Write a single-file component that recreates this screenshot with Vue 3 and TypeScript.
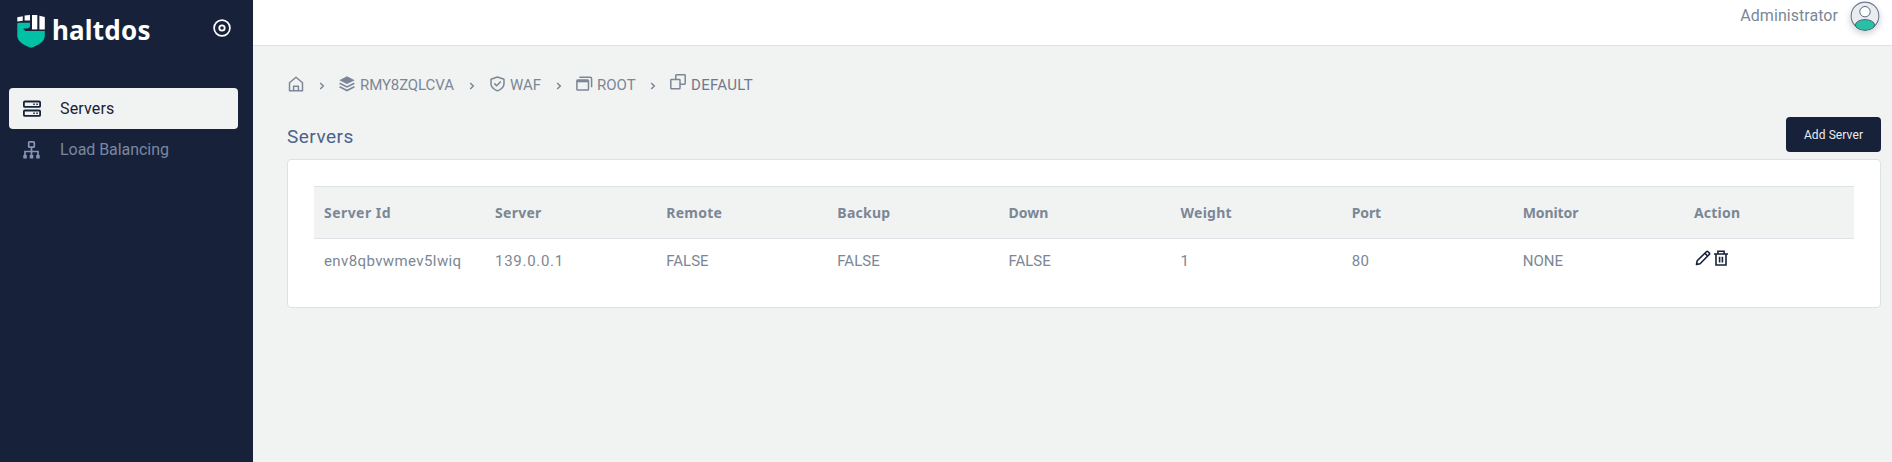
<script setup lang="ts">
interface ServerRow {
  id: string
  server: string
  remote: string
  backup: string
  down: string
  weight: number
  port: number
  monitor: string
}

const columns: string[] = ['Server Id', 'Server', 'Remote', 'Backup', 'Down', 'Weight', 'Port', 'Monitor', 'Action']

const rows: ServerRow[] = [
  {
    id: 'env8qbvwmev5lwiq',
    server: '139.0.0.1',
    remote: 'FALSE',
    backup: 'FALSE',
    down: 'FALSE',
    weight: 1,
    port: 80,
    monitor: 'NONE',
  },
]
</script>

<template>
  <div class="layout">
    <aside class="sidebar">
      <div class="brand">
        <svg class="brand-mark" width="29" height="34" viewBox="0 0 29 34">
          <g fill="#fff">
            <path d="M.3 3.3 5.800 2.200v4.600L.3 7.600z" />
            <path d="M7.600 1.600 13 1v5.600H7.600z" />
            <path d="M15 1h5.300v14.400H15z" />
            <path d="M22.400 1.700 27.800 2.900v12.500h-5.400z" />
          </g>
          <path fill="#00c1a5" d="M.3 9.300 3 8.800h10v2.800c0 1.800-.8 2.800-2.500 2.800H6.400v.9l2 1.700h19.400v5c0 4.500-5.600 9.600-13.700 11.700C6 31.600 .3 26.500 .3 22z" />
        </svg>
        <span class="brand-name">haltdos</span>
        <svg class="toggle" width="18" height="18" viewBox="0 0 18 18" fill="none" stroke="#fff">
          <circle cx="9" cy="9" r="7.900" stroke-width="1.700" />
          <circle cx="9" cy="9" r="2.700" stroke-width="1.800" />
        </svg>
      </div>
      <nav class="nav">
        <a class="nav-item active">
          <svg width="18" height="18" viewBox="0 0 18 18" fill="none" stroke="currentColor" stroke-width="1.800">
            <rect x=".9" y="1.500" width="16.200" height="5.400" rx="1" />
            <rect x=".9" y="10.500" width="16.200" height="5.400" rx="1" />
            <path stroke-width="1.500" d="M10.300 4.200h1.500M13.300 4.200h1.500M10.300 13.200h1.500M13.300 13.200h1.500" />
          </svg>
          <span class="nav-servers">Servers</span>
        </a>
        <a class="nav-item">
          <svg class="tree" width="18" height="18" viewBox="0 0 18 18" fill="none" stroke="currentColor" stroke-width="1.700">
            <rect x="5.700" y=".9" width="5.600" height="5.200" rx=".7" />
            <path d="M8.500 6.200v8M2 14.500v-4h13v4" />
            <path fill="currentColor" stroke="none" d="M.3 13.900h3.500v3.500H.3zM6.700 13.900h3.600v3.500H6.700zM13.200 13.900h3.500v3.500h-3.500z" />
          </svg>
          <span class="nav-balancing">Load Balancing</span>
        </a>
      </nav>
    </aside>

    <div class="page">
      <header class="topbar">
        <span>Administrator</span>
        <svg class="avatar" width="30" height="30" viewBox="0 0 30 30">
          <circle cx="15" cy="15" r="13.900" fill="#e9edf0" stroke="#6b7790" stroke-width="1.200" />
          <ellipse cx="15" cy="24" rx="9.600" ry="5.400" fill="#27c2a3" stroke="#4d6080" />
          <circle cx="15" cy="10.700" r="5.200" fill="#fff" stroke="#5c6880" />
        </svg>
      </header>

      <main class="content">
        <div class="crumbs">
          <svg class="home" width="16" height="16" viewBox="0 0 16 16" fill="none" stroke="currentColor" stroke-width="1.500" stroke-linejoin="round">
            <path d="M1.500 6.800 8 1.200l6.500 5.600v8H1.500z" />
            <path d="M5.600 14.600v-4.400h4.800v4.400" />
          </svg>
          <svg class="chevron" width="6" height="8" viewBox="0 0 6 8"><path d="m1.200 1 3.100 3-3.100 3" /></svg>
          <svg class="layers" width="16" height="16" viewBox="0 0 16 16">
            <path fill="currentColor" d="M8 .3 15.700 4.200 8 8.100 .3 4.200z" />
            <path fill="none" stroke="currentColor" stroke-width="1.600" d="m.6 7.200 7.400 3.700 7.400-3.700M.6 10.800 8 14.500l7.400-3.700" />
          </svg>
          <span class="crumb-root-id">RMY8ZQLCVA</span>
          <svg class="chevron" width="6" height="8" viewBox="0 0 6 8"><path d="m1.200 1 3.100 3-3.100 3" /></svg>
          <svg class="shield" width="15" height="16" viewBox="0 0 15 16" fill="none" stroke="currentColor" stroke-width="1.500" stroke-linejoin="round">
            <path d="M7.500 1 14 3.200v4.300c0 3.600-2.900 6-6.500 7.400C3.900 13.500 1 11.100 1 7.500V3.200z" />
            <path d="m4.300 7.400 2.300 2.300 4.200-4.200" />
          </svg>
          <span class="crumb-waf">WAF</span>
          <svg class="chevron" width="6" height="8" viewBox="0 0 6 8"><path d="m1.200 1 3.100 3-3.100 3" /></svg>
          <svg class="windows" width="17" height="16" viewBox="0 0 17 16" fill="none" stroke="currentColor" stroke-width="1.500">
            <path d="M3.400 1.300h10.800q1.400 0 1.400 1.400v8.500" />
            <rect x=".9" y="4" width="11.600" height="10" rx=".8" />
            <path stroke-width="2.200" d="M1 5.200h11.500" />
          </svg>
          <span class="crumb-profile">ROOT</span>
          <svg class="chevron" width="6" height="8" viewBox="0 0 6 8"><path d="m1.200 1 3.100 3-3.100 3" /></svg>
          <svg class="clone" width="16" height="16" viewBox="0 0 16 16" fill="none" stroke="currentColor" stroke-width="1.500">
            <rect x=".8" y="5.600" width="9.200" height="9.200" rx=".6" />
            <path d="M5.800 5.400V1.500q0-.7.7-.7h8q.7 0 .7.700v8q0 .7-.7.700h-4.300" />
          </svg>
          <span class="crumb-current">DEFAULT</span>
        </div>

        <div class="heading">
          <h1>Servers</h1>
          <button type="button" class="add">Add Server</button>
        </div>

        <section class="card">
          <table>
            <thead>
              <tr>
                <th v-for="column in columns" :key="column">{{ column }}</th>
              </tr>
            </thead>
            <tbody>
              <tr v-for="row in rows" :key="row.id">
                <td class="id">{{ row.id }}</td>
                <td class="address">{{ row.server }}</td>
                <td>{{ row.remote }}</td>
                <td>{{ row.backup }}</td>
                <td>{{ row.down }}</td>
                <td>{{ row.weight }}</td>
                <td class="port">{{ row.port }}</td>
                <td>{{ row.monitor }}</td>
                <td>
                  <div class="actions">
                    <svg width="16" height="16" viewBox="0 0 16 16" fill="none" stroke="currentColor" stroke-width="1.600" stroke-linejoin="round">
                      <path d="m1.500 14.500.7-3.800 9.200-9q.8-.8 1.600 0l1.200 1.200q.8.800 0 1.600l-9.100 9.200z" />
                      <path d="m10 3.400 2.600 2.600" />
                    </svg>
                    <svg width="16" height="16" viewBox="0 0 16 16" fill="none" stroke="currentColor" stroke-width="1.600">
                      <path d="M1 4h14M3 4v11h10V4M4.900 3.800V1.200h6.200v2.600M6.600 6.700v5.800M9.400 6.700v5.800" />
                    </svg>
                  </div>
                </td>
              </tr>
            </tbody>
          </table>
        </section>
      </main>
    </div>
  </div>
</template>

<style>
body {
  margin: 0;
  background: #f1f3f2;
}
</style>

<style scoped>
.layout {
  display: flex;
  height: 462px;
  overflow: hidden;
  background: #f1f3f2;
  color: #7b8796;
  font-family: Roboto, "Liberation Sans", sans-serif;
  font-size: 15px;
}

svg {
  display: block;
  flex: none;
}

.sidebar {
  flex: none;
  box-sizing: border-box;
  width: 253px;
  padding: 0 15px 0 9px;
  background: #18213a;
}

.brand {
  display: flex;
  height: 88px;
  padding-left: 8px;
}

.brand-mark {
  margin-top: 14px;
}

.brand-name {
  margin: 12px 0 0 6px;
  color: #fff;
  font: 700 26px/36px "Noto Sans", sans-serif;
  letter-spacing: 0.2px;
}

.toggle {
  margin: 19px 7.500px 0 auto;
}

.nav-item {
  display: flex;
  align-items: center;
  gap: 19px;
  height: 41px;
  padding-left: 14px;
  border-radius: 4px;
  color: #7888a0;
  font-size: 16px;
}

.nav-item.active {
  background: #f1f3f2;
  color: #18213a;
}

.tree {
  color: #8795b5;
}

.nav-servers {
  letter-spacing: 0.15px;
}

.nav-balancing {
  letter-spacing: -0.05px;
}

.page {
  flex: 1;
  min-width: 0;
}

.topbar {
  display: flex;
  box-sizing: border-box;
  height: 46px;
  justify-content: flex-end;
  gap: 12px;
  padding-right: 12px;
  border-bottom: 1px solid #dee2e6;
  background: #fff;
  font-size: 16px;
  letter-spacing: 0.05px;
  line-height: 31px;
}

.avatar {
  margin-top: 1px;
  border-radius: 50%;
  box-shadow: 0 3px 6px rgb(0 0 0 / 18%);
}

.content {
  padding: 0 11px 0 34px;
}

.crumbs {
  display: flex;
  align-items: center;
  height: 26px;
  padding-top: 25px;
  font-size: 15px;
  line-height: 26px;
}

.crumbs span {
  padding-top: 2px;
}

.chevron {
  margin-top: 4px;
  fill: none;
  stroke: #7b8796;
  stroke-width: 1.5;
}

.home {
  margin: 0 15px 0 1px;
}

.layers {
  margin: 0 5px 0 14px;
}

.crumb-root-id {
  width: 93px;
  margin-right: 16px;
  letter-spacing: -0.1px;
}

.shield {
  margin: 0 5px 0 15px;
}

.crumb-waf {
  width: 31px;
  margin-right: 15px;
}

.windows {
  margin: 0 4px 0 14px;
}

.crumb-profile {
  width: 39px;
  margin-right: 14px;
}

.clone {
  margin: -4px 5px 0 14px;
}

.crumb-current {
  color: #6e7a8c;
  letter-spacing: 0.3px;
}

.heading {
  display: flex;
  justify-content: space-between;
  padding-top: 20px;
}

h1 {
  margin: 0;
  color: #4b628a;
  font-size: 19px;
  font-weight: 400;
  letter-spacing: 0.5px;
  line-height: 39px;
}

.add {
  width: 95px;
  height: 35px;
  padding: 0;
  border: 0;
  border-radius: 4px;
  background: #18213a;
  color: #e9ecef;
  font-family: inherit;
  font-size: 12px;
  letter-spacing: 0.1px;
}

.card {
  box-sizing: border-box;
  height: 149px;
  margin-top: 3px;
  padding: 26px;
  border: 1px solid #dee2e6;
  border-radius: 4px;
  background: #fff;
}

table {
  width: 100%;
  border-spacing: 0;
  table-layout: fixed;
}

th {
  height: 51px;
  padding: 0 0 0 10px;
  border-top: 1px solid #dee2e6;
  border-bottom: 1px solid #dee2e6;
  background: #f1f3f2;
  font: 700 14px/20px "Noto Sans", sans-serif;
  letter-spacing: 0.25px;
  text-align: left;
}

th:first-child {
  letter-spacing: 0.45px;
}

th:nth-child(5) {
  letter-spacing: 0;
}

th:nth-child(7),
th:nth-child(8) {
  letter-spacing: -0.1px;
}

td {
  height: 44px;
  padding: 0 0 0 10px;
  line-height: 20px;
}

th:nth-child(n + 6),
td:nth-child(n + 6) {
  padding-left: 11px;
}

.id {
  letter-spacing: 0.4px;
}

.address {
  letter-spacing: 0.7px;
}

.port {
  letter-spacing: 0.5px;
}

.actions {
  display: flex;
  gap: 2px;
  margin-top: -7px;
  padding-left: 1px;
  color: #18213a;
}
</style>
